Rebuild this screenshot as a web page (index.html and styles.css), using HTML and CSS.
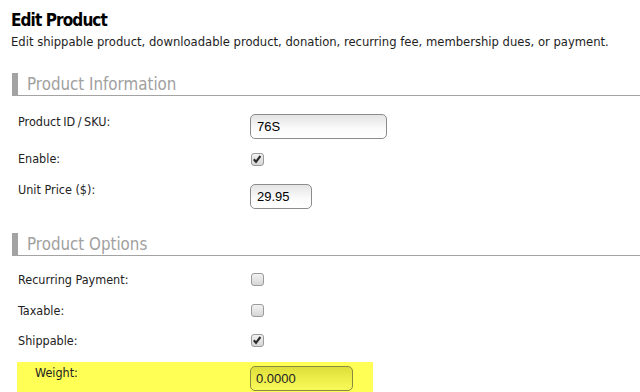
FILE: index.html
```html
<!DOCTYPE html>
<html>
<head>
<meta charset="utf-8">
<link rel="stylesheet" href="styles.css">
</head>
<body>
<h1 class="title">Edit Product</h1>
<p class="subtitle">Edit shippable product, downloadable product, donation, recurring fee, membership dues, or payment.</p>

<h2 class="section section-first">Product Information</h2>
<div class="row row-sku">
  <label class="label label-sku">Product ID / SKU:</label>
  <input class="text text-sku" type="text" value="76S">
</div>
<div class="row row-enable">
  <label class="label">Enable:</label>
  <span class="check checked"><svg viewBox="0 0 12 12" width="12" height="12"><path d="M2.8 6.3 L5 8.8 L9.4 3" fill="none" stroke="#2a2a2a" stroke-width="2.1"/></svg></span>
</div>
<div class="row row-price">
  <label class="label">Unit Price ($):</label>
  <input class="text text-price" type="text" value="29.95">
</div>

<h2 class="section section-second">Product Options</h2>
<div class="row row-recurring">
  <label class="label">Recurring Payment:</label>
  <span class="check"></span>
</div>
<div class="row row-taxable">
  <label class="label">Taxable:</label>
  <span class="check"></span>
</div>
<div class="row row-shippable">
  <label class="label">Shippable:</label>
  <span class="check checked"><svg viewBox="0 0 12 12" width="12" height="12"><path d="M2.8 6.3 L5 8.8 L9.4 3" fill="none" stroke="#2a2a2a" stroke-width="2.1"/></svg></span>
</div>
<div class="row row-weight">
  <label class="label label-weight">Weight:</label>
  <input class="text text-weight" type="text" value="0.0000">
</div>
</body>
</html>
```
FILE: styles.css
```css
html, body {
  margin: 0;
  padding: 0;
  background: #fff;
  overflow: hidden;
}
body {
  font-family: "DejaVu Sans Condensed", "DejaVu Sans", Verdana, sans-serif;
  font-stretch: condensed;
  color: #222;
}
.title {
  margin: 0;
  padding: 9px 11px 0;
  font-size: 17px;
  line-height: 22px;
  font-weight: bold;
  letter-spacing: -0.9px;
  color: #000;
}
.subtitle {
  margin: 3px 0 0;
  padding-left: 11px;
  font-size: 12.9px;
  line-height: 16px;
  color: #1e1e1e;
  white-space: nowrap;
}
.section {
  margin: 0 0 0 12px;
  height: 22px;
  border-left: 6px solid #a3a3a3;
  border-bottom: 1px solid #a3a3a3;
  padding-left: 9px;
  font-size: 16.8px;
  line-height: 22px;
  font-weight: normal;
  color: #a0a0a0;
}
.section-first { margin-top: 23px; }
.section-second { margin-top: 24px; }
.row {
  display: flex;
  align-items: flex-start;
  margin-left: 18px;
}
.label {
  width: 232px;
  flex: none;
  font-size: 12.5px;
  line-height: 16px;
  color: #222;
}
.label-sku { word-spacing: -1px; }
.row-sku { margin-top: 18px; }
.row-enable { margin-top: 12px; }
.row-price { margin-top: 15px; }
.row-recurring { margin-top: 16px; }
.row-taxable { margin-top: 15px; }
.row-shippable { margin-top: 14px; }
.row-weight {
  margin-top: 13px;
  margin-left: 17px;
  width: 356px;
  height: 32px;
  background: #ffff55;
}
.label-weight {
  width: 215px;
  padding-left: 18px;
  padding-top: 3px;
}
.text {
  box-sizing: border-box;
  height: 25px;
  margin: 0;
  padding: 0 6px;
  border: 1px solid #8c8c8c;
  border-radius: 5px;
  background: linear-gradient(#e4e4e4, #fbfbfb 60%, #ffffff);
  font-family: "Liberation Sans", Arial, sans-serif;
  font-stretch: normal;
  font-size: 13px;
  color: #000;
  outline: none;
}
.text-sku { width: 137px; }
.text-price { width: 62px; margin-top: 2px; }
.text-weight {
  width: 103px;
  margin-top: 4px;
  padding-left: 5px;
  background: linear-gradient(#dede3a, #eeee4a 50%, #f8f85a);
  border-color: #8a8a40;
  color: #222;
}
.check {
  box-sizing: border-box;
  display: block;
  width: 13px;
  height: 13px;
  margin-left: 1px;
  border: 1px solid #9a9a9a;
  border-radius: 3px;
  background: linear-gradient(#f2f2f2, #d6d6d6);
  position: relative;
}
.check svg {
  position: absolute;
  left: -1px;
  top: -1px;
}
.row-enable .check { margin-top: 2px; }
.row-recurring .check { margin-top: 1px; }
.row-taxable .check { margin-top: 1px; }
.row-shippable .check { margin-top: 1px; }
```
